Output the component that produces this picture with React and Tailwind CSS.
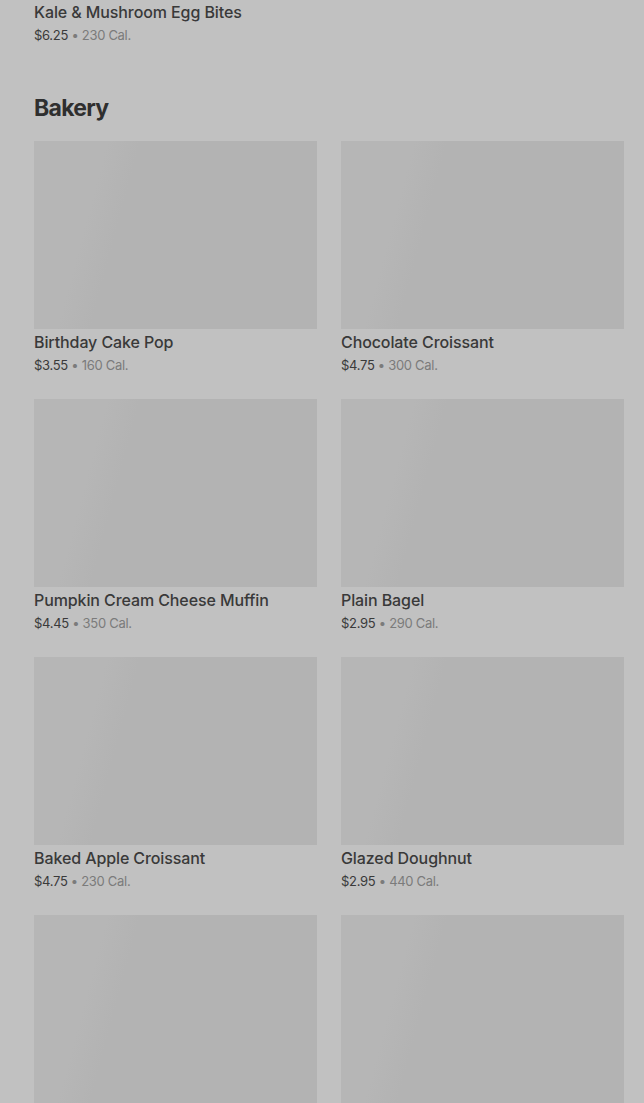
const bakery = [
  { name: "Birthday Cake Pop", price: "$3.55", cal: "160 Cal." },
  { name: "Chocolate Croissant", price: "$4.75", cal: "300 Cal." },
  { name: "Pumpkin Cream Cheese Muffin", price: "$4.45", cal: "350 Cal." },
  { name: "Plain Bagel", price: "$2.95", cal: "290 Cal." },
  { name: "Baked Apple Croissant", price: "$4.75", cal: "230 Cal." },
  { name: "Glazed Doughnut", price: "$2.95", cal: "440 Cal." },
  { name: "Cheese Danish", price: "$3.75", cal: "290 Cal." },
  { name: "Blueberry Muffin", price: "$3.45", cal: "360 Cal." },
];

function ItemCard({ item }) {
  return (
    <div className="flex flex-col">
      <div className="h-[188px] bg-[linear-gradient(105deg,#b6b6b6_0%,#b6b6b6_22%,#b3b3b3_32%,#b3b3b3_100%)]" />
      <div className="mt-[1px] text-[16px] leading-6 font-medium text-[#393939] tracking-[-0.1px]">
        {item.name}
      </div>
      <div className="mt-[1px] text-[13px] leading-5 text-[#3a3a3a] tracking-[-0.3px]">
        {item.price}
        <span className="text-[#7b7b7b]"> • {item.cal}</span>
      </div>
    </div>
  );
}

export default function App() {
  return (
    <div
      className="min-h-screen bg-[#c1c1c1] overflow-hidden pl-[34px] pr-[20px]"
      style={{ fontFamily: "Inter, 'Noto Sans', sans-serif" }}
    >
      {/* previous section, scrolled off */}
      <div className="-mt-[189px] grid grid-cols-2 gap-x-6">
        <ItemCard item={{ name: "Kale & Mushroom Egg Bites", price: "$6.25", cal: "230 Cal." }} />
      </div>

      <section className="mt-[47px]">
        <h2 className="text-[23px] leading-8 font-bold text-[#2f2f2f] tracking-[-0.7px] mb-[17px]">Bakery</h2>
        <div className="grid grid-cols-2 gap-x-6 gap-y-6">
          {bakery.map((item) => (
            <ItemCard key={item.name} item={item} />
          ))}
        </div>
      </section>
    </div>
  );
}
